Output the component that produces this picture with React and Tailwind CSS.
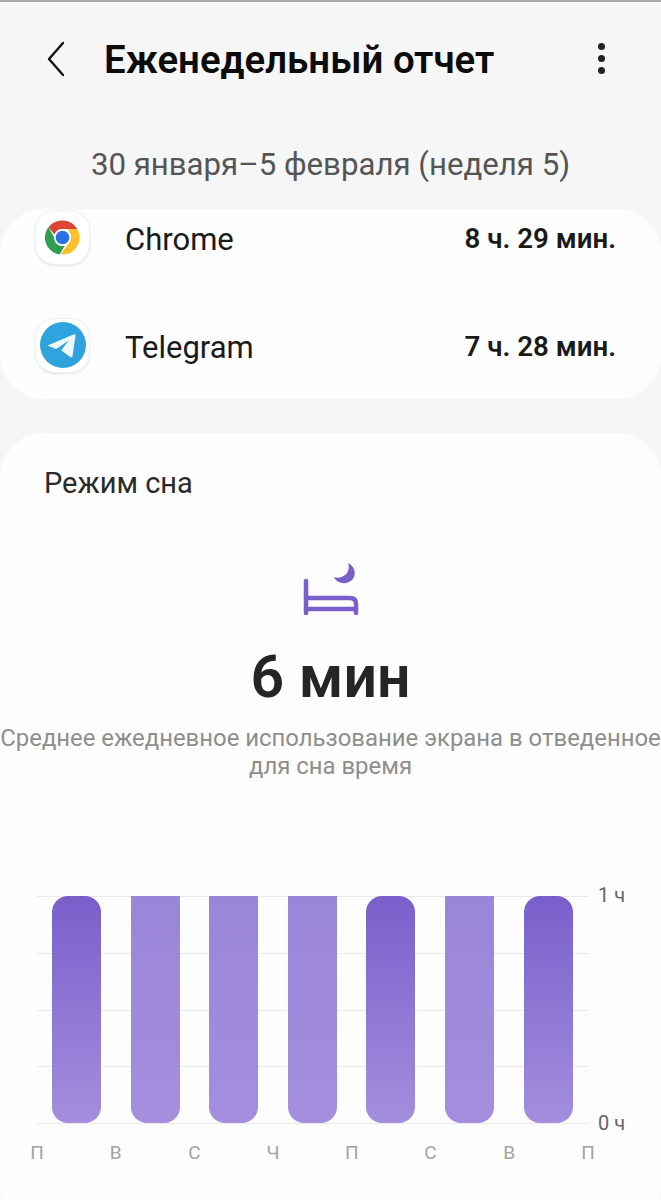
import React from "react";

const font = { fontFamily: "Roboto, sans-serif" };

const bars = [
  "bg-gradient-to-b from-[#7a5fcb] to-[#a48edd]",
  "bg-gradient-to-b from-[#9a86d9] to-[#a48edd] rounded-t-none",
  "bg-gradient-to-b from-[#9a86d9] to-[#a48edd] rounded-t-none",
  "bg-gradient-to-b from-[#9a86d9] to-[#a48edd] rounded-t-none",
  "bg-gradient-to-b from-[#7a5fcb] to-[#a48edd]",
  "bg-gradient-to-b from-[#9a86d9] to-[#a48edd] rounded-t-none",
  "bg-gradient-to-b from-[#7a5fcb] to-[#a48edd]",
];
const days = ["П", "В", "С", "Ч", "П", "С", "В", "П"];

const ChromeIcon = () => (
  <svg viewBox="0 0 48 48" className="w-[41px] h-[41px]">
    <path d="M24 4a20 20 0 0 1 17.3 10H24a10 10 0 0 0-9.4 6.6L7.5 12A20 20 0 0 1 24 4z" fill="#db4437" />
    <path d="M7.5 12l8.7 15a9.5 9.5 0 0 0 10.6 6.6L20.6 43.8A20 20 0 0 1 7.5 12z" fill="#2f9e4f" />
    <path d="M41.3 14A20 20 0 0 1 22 43.9L31.5 30a10 10 0 0 0 .6-12 10 10 0 0 0-2-4z" fill="#fcc02d" />
    <circle cx="24" cy="24" r="10" fill="#fff" />
    <circle cx="24" cy="24" r="8" fill="#2a71e0" />
  </svg>
);

const TelegramIcon = () => (
  <svg viewBox="0 0 46 46" className="w-[46px] h-[46px]">
    <circle cx="23" cy="23" r="23" fill="#2fa3de" />
    <path d="M7.5 23.5L33.5 12.5c1.2-.5 2.2.2 2 1.6L32.5 34c-.2 1.3-1.3 1.6-2.3.9l-9-6.6 7.5-9.8-12.5 8.6-1.5-.6z" fill="#fff" fillOpacity="0.92" />
  </svg>
);

const AppRow = ({ name, time, children }) => (
  <div className="flex items-center h-[108px] pl-[35px] pr-[45px]">
    <div className="flex items-center justify-center w-[55px] h-[55px] mb-[4px] rounded-[20px] bg-white border border-[#f0f0f0] shadow-[0_1px_2px_rgba(0,0,0,0.1)]">
      {children}
    </div>
    <span className="ml-[35px] mt-[2px] flex-1 text-[31px] text-[#1a1a1a]">{name}</span>
    <span className="text-[27.7px] font-semibold text-[#1a1a1a]">{time}</span>
  </div>
);

const App = () => {
  return (
    <div className="w-[661px] h-[1200px] overflow-hidden bg-[#f6f6f6] border-t-2 border-[#a9a9a9]" style={font}>
      {/* header */}
      <div className="flex items-center h-[116px] pl-[46px] pr-[56px]">
        <svg viewBox="0 0 20 36" className="w-[20px] h-[36px] mb-[3px]" fill="none" stroke="#111" strokeWidth="2.4" strokeLinecap="round" strokeLinejoin="round">
          <path d="M17 2L3 18l14 16" />
        </svg>
        <span className="ml-[38px] flex-1 text-[38.4px] font-semibold text-[#0c0c0c]">Еженедельный отчет</span>
        <div className="flex flex-col gap-[5px] mb-[4px]">
          <div className="w-[7px] h-[7px] rounded-full bg-[#222]" />
          <div className="w-[7px] h-[7px] rounded-full bg-[#222]" />
          <div className="w-[7px] h-[7px] rounded-full bg-[#222]" />
        </div>
      </div>

      <div className="text-center text-[31.2px] text-[#555] leading-[36px] mt-[29px]">30 января–5 февраля (неделя 5)</div>

      {/* apps */}
      <div className="mt-[26px] h-[190px] rounded-[44px] bg-[#fdfdfd] overflow-hidden">
        <div className="mt-[-24px]">
          <AppRow name="Chrome" time="8 ч. 29 мин.">
            <ChromeIcon />
          </AppRow>
          <AppRow name="Telegram" time="7 ч. 28 мин.">
            <TelegramIcon />
          </AppRow>
        </div>
      </div>

      {/* sleep */}
      <div className="mt-[34px] h-[800px] rounded-[44px] bg-[#fdfdfd]">
        <div className="pt-[32px] pl-[44px] text-[29px] leading-[36px] text-[#2a2a2a]">Режим сна</div>

        <div className="flex justify-center mt-[62px]">
          <svg viewBox="0 0 56 52" className="w-[56px] h-[52px]">
            <path d="M45 0C52 3 54 12 49 17C44 22 34 21 31 14C37 16 43 13 45 8C46 5 46 3 45 0z" fill="#7a5fcb" />
            <g fill="none" stroke="#7a5fcb" strokeWidth="4.5" strokeLinecap="round" strokeLinejoin="round">
              <path d="M3 18v32" />
              <path d="M3 35h44c4 0 6 2 6 6v9" />
              <path d="M3 46h50" />
            </g>
          </svg>
        </div>

        <div className="text-center text-[59px] leading-[64px] font-semibold text-[#252525] mt-[30px]">6 мин</div>

        <div className="text-center text-[23.9px] leading-[28px] text-[#8e8e8e] mt-[15px] whitespace-nowrap">
          Среднее ежедневное использование экрана в отведенное
          <br />
          для сна время
        </div>

        {/* chart */}
        <div className="relative mt-[116px] ml-[37px] w-[551px] h-[228px]">
          <div className="absolute inset-0 flex flex-col justify-between">
            {[0, 1, 2, 3, 4].map((i) => (
              <div key={i} className="h-px bg-[#e9e9e9]" />
            ))}
          </div>
          <div className="relative flex h-[227px] pl-[15px] gap-[29.6px]">
            {bars.map((cls, i) => (
              <div key={i} className={`w-[49px] h-full rounded-[16px] ${cls}`} />
            ))}
          </div>
          <span className="absolute left-[561px] top-[-13px] text-[20px] leading-[24px] text-[#666] whitespace-nowrap">1 ч</span>
          <span className="absolute left-[561px] top-[215px] text-[20px] leading-[24px] text-[#666] whitespace-nowrap">0 ч</span>
        </div>
        <div className="flex justify-between w-[571px] ml-[27px] mt-[17px]">
          {days.map((d, i) => (
            <span key={i} className="w-[20px] text-center text-[19px] leading-[24px] text-[#a2a2a2]">{d}</span>
          ))}
        </div>
      </div>
    </div>
  );
};

export default App;
